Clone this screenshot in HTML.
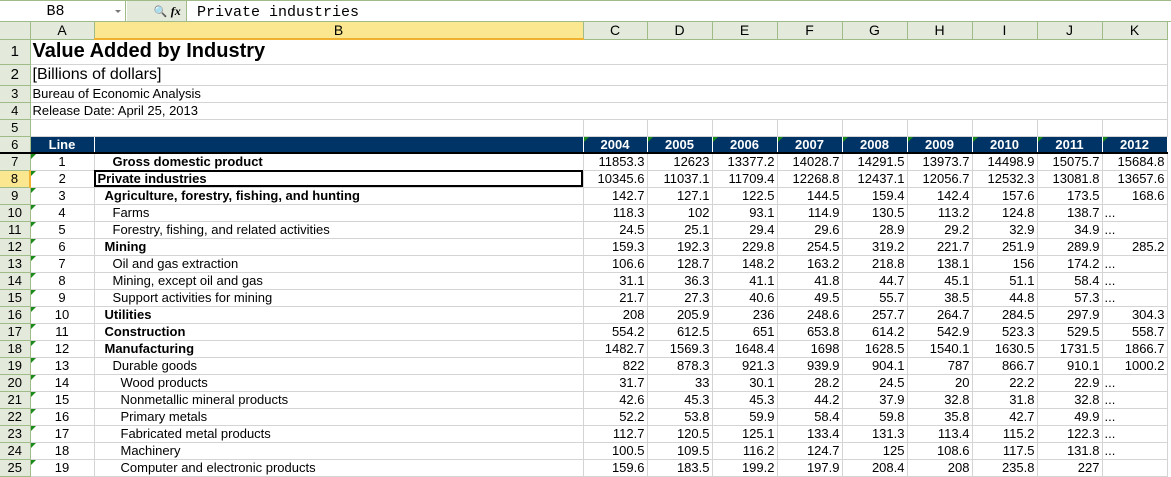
<!DOCTYPE html>
<html><head><meta charset="utf-8"><style>
*{margin:0;padding:0;box-sizing:border-box}
body{width:1171px;height:468px;overflow:hidden;background:#fff;font-family:"Liberation Sans",Arial,sans-serif;font-size:13px;color:#000;position:relative}
#fb{position:absolute;left:0;top:0;width:1171px;height:22px;border-top:1px solid #9ebb88;border-bottom:1px solid #9ebb88;background:#fff}
#nb{position:absolute;left:0;top:0;width:126px;height:20px;border-right:1px solid #9ebb88;text-align:center;line-height:21px;font-size:15px;font-family:"Liberation Mono",monospace;padding-right:14px}
#nb span{position:absolute;right:4px;top:9px;width:0;height:0;border-left:3px solid transparent;border-right:3px solid transparent;border-top:3px solid #777}
#ic{position:absolute;left:127px;top:0;width:60px;height:20px;background:#e3eadb;border-right:1px solid #9ebb88;font-size:12px;line-height:20px}
#ft{position:absolute;left:197px;top:0;line-height:23px;font-family:"Liberation Mono",monospace;font-size:15px}
table{position:absolute;left:0;top:22px;border-collapse:collapse;table-layout:fixed;width:1167px}
td{border-right:1px solid #d4d4d4;border-bottom:1px solid #d4d4d4;height:17px;padding:0 2px;white-space:nowrap;overflow:hidden;line-height:15px;position:relative}
td.h{background:#e3eadb;border-right:1px solid #9ebb88;border-bottom:1px solid #9ebb88;text-align:center;padding:0}
tr.ch td{background:#e3eadb;border-right:1px solid #9ebb88;border-bottom:1px solid #9ebb88;text-align:center;font-size:14px}
tr.ch td.sel{background:#fbe78f;border-bottom:2px solid #f0b030}
td.hs{background:#fbe78f!important;border-right:2px solid #f0b030!important}
td.n{text-align:right}
td.a{text-align:center}
td.a::before,td.y::before{content:"";position:absolute;left:0;top:0;border-top:5px solid #1a8a1a;border-right:5px solid transparent}
tr.hd td{background:#003366;color:#fff;font-weight:bold;text-align:center;border-right:1px solid #fff;border-bottom:2px solid #000;font-size:13px}
tr.hd td.h{background:#e3eadb;color:#000;font-weight:normal;border-right:1px solid #9ebb88}
b{font-weight:bold}
.g{border-right:none}
</style></head><body>
<div id="fb"><div id="nb">B8<span></span></div><div id="ic">&nbsp;&nbsp;&nbsp;&nbsp;&nbsp;&nbsp;&nbsp;&nbsp;<span style="font-size:11px">🔍</span>&nbsp;<i style="font-family:'Liberation Serif',serif;font-weight:bold">fx</i></div><div id="ft">Private industries</div></div>
<div style="position:absolute;left:1167px;top:22px;width:4px;height:446px;background:#fff;border-left:1px solid #c8c8c8"></div>
<table>
<colgroup><col style="width:30px"><col style="width:64px"><col style="width:489px"><col style="width:64px"><col style="width:65px"><col style="width:65px"><col style="width:65px"><col style="width:65px"><col style="width:65px"><col style="width:65px"><col style="width:65px"><col style="width:65px"></colgroup>
<tr class="ch"><td></td><td>A</td><td class="sel">B</td><td>C</td><td>D</td><td>E</td><td>F</td><td>G</td><td>H</td><td>I</td><td>J</td><td>K</td></tr>
<tr style="height:25px"><td class="h" style="font-size:15px">1</td><td colspan="11" style="font-size:20px;font-weight:bold;height:25px;padding-left:2px">Value Added by Industry</td></tr>
<tr style="height:21px"><td class="h" style="font-size:15px">2</td><td colspan="11" style="font-size:16px;height:21px">[Billions of dollars]</td></tr>
<tr><td class="h">3</td><td colspan="11">Bureau of Economic Analysis</td></tr>
<tr><td class="h">4</td><td colspan="11">Release Date: April 25, 2013</td></tr>
<tr><td class="h">5</td><td class="g"></td><td></td><td></td><td></td><td></td><td></td><td></td><td></td><td></td><td></td><td></td></tr>
<tr class="hd"><td class="h">6</td><td>Line</td><td></td><td class="y">2004</td><td class="y">2005</td><td class="y">2006</td><td class="y">2007</td><td class="y">2008</td><td class="y">2009</td><td class="y">2010</td><td class="y">2011</td><td class="y">2012</td></tr>
<tr><td class="h">7</td><td class="a">1</td><td style="padding-left:18px"><b>Gross domestic product</b></td><td class="n">11853.3</td><td class="n">12623</td><td class="n">13377.2</td><td class="n">14028.7</td><td class="n">14291.5</td><td class="n">13973.7</td><td class="n">14498.9</td><td class="n">15075.7</td><td class="n">15684.8</td></tr>
<tr><td class="h hs">8</td><td class="a">2</td><td style="outline:2px solid #000;outline-offset:-2px;padding-left:3px"><b>Private industries</b></td><td class="n">10345.6</td><td class="n">11037.1</td><td class="n">11709.4</td><td class="n">12268.8</td><td class="n">12437.1</td><td class="n">12056.7</td><td class="n">12532.3</td><td class="n">13081.8</td><td class="n">13657.6</td></tr>
<tr><td class="h">9</td><td class="a">3</td><td style="padding-left:10px"><b>Agriculture, forestry, fishing, and hunting</b></td><td class="n">142.7</td><td class="n">127.1</td><td class="n">122.5</td><td class="n">144.5</td><td class="n">159.4</td><td class="n">142.4</td><td class="n">157.6</td><td class="n">173.5</td><td class="n">168.6</td></tr>
<tr><td class="h">10</td><td class="a">4</td><td style="padding-left:18px">Farms</td><td class="n">118.3</td><td class="n">102</td><td class="n">93.1</td><td class="n">114.9</td><td class="n">130.5</td><td class="n">113.2</td><td class="n">124.8</td><td class="n">138.7</td><td>...</td></tr>
<tr><td class="h">11</td><td class="a">5</td><td style="padding-left:18px">Forestry, fishing, and related activities</td><td class="n">24.5</td><td class="n">25.1</td><td class="n">29.4</td><td class="n">29.6</td><td class="n">28.9</td><td class="n">29.2</td><td class="n">32.9</td><td class="n">34.9</td><td>...</td></tr>
<tr><td class="h">12</td><td class="a">6</td><td style="padding-left:10px"><b>Mining</b></td><td class="n">159.3</td><td class="n">192.3</td><td class="n">229.8</td><td class="n">254.5</td><td class="n">319.2</td><td class="n">221.7</td><td class="n">251.9</td><td class="n">289.9</td><td class="n">285.2</td></tr>
<tr><td class="h">13</td><td class="a">7</td><td style="padding-left:18px">Oil and gas extraction</td><td class="n">106.6</td><td class="n">128.7</td><td class="n">148.2</td><td class="n">163.2</td><td class="n">218.8</td><td class="n">138.1</td><td class="n">156</td><td class="n">174.2</td><td>...</td></tr>
<tr><td class="h">14</td><td class="a">8</td><td style="padding-left:18px">Mining, except oil and gas</td><td class="n">31.1</td><td class="n">36.3</td><td class="n">41.1</td><td class="n">41.8</td><td class="n">44.7</td><td class="n">45.1</td><td class="n">51.1</td><td class="n">58.4</td><td>...</td></tr>
<tr><td class="h">15</td><td class="a">9</td><td style="padding-left:18px">Support activities for mining</td><td class="n">21.7</td><td class="n">27.3</td><td class="n">40.6</td><td class="n">49.5</td><td class="n">55.7</td><td class="n">38.5</td><td class="n">44.8</td><td class="n">57.3</td><td>...</td></tr>
<tr><td class="h">16</td><td class="a">10</td><td style="padding-left:10px"><b>Utilities</b></td><td class="n">208</td><td class="n">205.9</td><td class="n">236</td><td class="n">248.6</td><td class="n">257.7</td><td class="n">264.7</td><td class="n">284.5</td><td class="n">297.9</td><td class="n">304.3</td></tr>
<tr><td class="h">17</td><td class="a">11</td><td style="padding-left:10px"><b>Construction</b></td><td class="n">554.2</td><td class="n">612.5</td><td class="n">651</td><td class="n">653.8</td><td class="n">614.2</td><td class="n">542.9</td><td class="n">523.3</td><td class="n">529.5</td><td class="n">558.7</td></tr>
<tr><td class="h">18</td><td class="a">12</td><td style="padding-left:10px"><b>Manufacturing</b></td><td class="n">1482.7</td><td class="n">1569.3</td><td class="n">1648.4</td><td class="n">1698</td><td class="n">1628.5</td><td class="n">1540.1</td><td class="n">1630.5</td><td class="n">1731.5</td><td class="n">1866.7</td></tr>
<tr><td class="h">19</td><td class="a">13</td><td style="padding-left:18px">Durable goods</td><td class="n">822</td><td class="n">878.3</td><td class="n">921.3</td><td class="n">939.9</td><td class="n">904.1</td><td class="n">787</td><td class="n">866.7</td><td class="n">910.1</td><td class="n">1000.2</td></tr>
<tr><td class="h">20</td><td class="a">14</td><td style="padding-left:26px">Wood products</td><td class="n">31.7</td><td class="n">33</td><td class="n">30.1</td><td class="n">28.2</td><td class="n">24.5</td><td class="n">20</td><td class="n">22.2</td><td class="n">22.9</td><td>...</td></tr>
<tr><td class="h">21</td><td class="a">15</td><td style="padding-left:26px">Nonmetallic mineral products</td><td class="n">42.6</td><td class="n">45.3</td><td class="n">45.3</td><td class="n">44.2</td><td class="n">37.9</td><td class="n">32.8</td><td class="n">31.8</td><td class="n">32.8</td><td>...</td></tr>
<tr><td class="h">22</td><td class="a">16</td><td style="padding-left:26px">Primary metals</td><td class="n">52.2</td><td class="n">53.8</td><td class="n">59.9</td><td class="n">58.4</td><td class="n">59.8</td><td class="n">35.8</td><td class="n">42.7</td><td class="n">49.9</td><td>...</td></tr>
<tr><td class="h">23</td><td class="a">17</td><td style="padding-left:26px">Fabricated metal products</td><td class="n">112.7</td><td class="n">120.5</td><td class="n">125.1</td><td class="n">133.4</td><td class="n">131.3</td><td class="n">113.4</td><td class="n">115.2</td><td class="n">122.3</td><td>...</td></tr>
<tr><td class="h">24</td><td class="a">18</td><td style="padding-left:26px">Machinery</td><td class="n">100.5</td><td class="n">109.5</td><td class="n">116.2</td><td class="n">124.7</td><td class="n">125</td><td class="n">108.6</td><td class="n">117.5</td><td class="n">131.8</td><td>...</td></tr>
<tr><td class="h">25</td><td class="a">19</td><td style="padding-left:26px">Computer and electronic products</td><td class="n">159.6</td><td class="n">183.5</td><td class="n">199.2</td><td class="n">197.9</td><td class="n">208.4</td><td class="n">208</td><td class="n">235.8</td><td class="n">227</td><td></td></tr>
</table>
</body></html>
